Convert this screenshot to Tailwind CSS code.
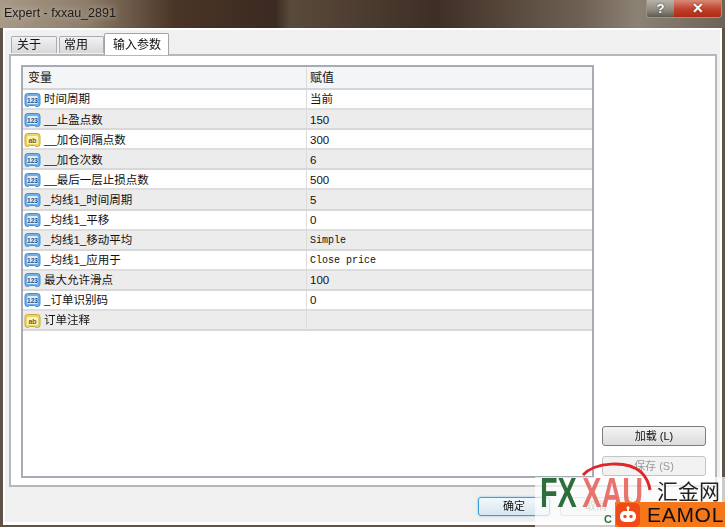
<!DOCTYPE html>
<html lang="zh">
<head>
    <meta charset="UTF-8">
    <title>Expert - fxxau_2891</title>
    <script src="https://cdn.jsdelivr.net/npm/@tailwindcss/browser@4"></script>
</head>
<body class="relative w-[725px] h-[527px] overflow-hidden flex flex-col bg-[#5f5246] blur-[0.4px] font-['Liberation_Sans','Noto_Sans_CJK_SC',sans-serif] text-[12px] text-[#111]">
    <svg class="hidden">
        <symbol id="ic-num" viewBox="0 0 16 15">
            <path d="M3 .5h10a2.500 2.500 0 0 1 2.500 2.500v8a2.500 2.500 0 0 1-2.500 2.500h-1.500l-1.500-1H5l-1.500 1H3A2.500 2.500 0 0 1 .5 11V3A2.500 2.500 0 0 1 3 .5z" fill="#6fb0e8" stroke="#4a8ccc"/>
            <rect x="2.500" y="3" width="11" height="8" rx="1.500" fill="#dcecfa"/>
            <text x="8" y="9.500" text-anchor="middle" font-size="6.500" font-weight="700" font-family="Liberation Sans" fill="#23508c">123</text>
        </symbol>
        <symbol id="ic-str" viewBox="0 0 16 15">
            <path d="M3 .5h10a2.500 2.500 0 0 1 2.500 2.500v8a2.500 2.500 0 0 1-2.500 2.500h-1.500l-1.500-1H5l-1.500 1H3A2.500 2.500 0 0 1 .5 11V3A2.500 2.500 0 0 1 3 .5z" fill="#ecd560" stroke="#c8aa3c"/>
            <rect x="2.500" y="3" width="11" height="8" rx="1.500" fill="#fbf3c4"/>
            <text x="8" y="9.500" text-anchor="middle" font-size="7" font-weight="700" font-family="Liberation Sans" fill="#7a5c14">ab</text>
        </symbol>
    </svg>

    <!-- title bar -->
    <header class="h-[28px] shrink-0 flex justify-between bg-[linear-gradient(90deg,#a89a88_0%,#8d7c69_12%,#4a3527_24%,#3b2a20_38%,#5a4a3b_40%,#3f2e24_60%,#6e6153_80%,#8c8274_88%,#6c6256_100%)]">
        <span class="pl-[4px] pt-[4px] text-[12.500px] leading-[18px] text-[#1c1c1c] [text-shadow:0_0_6px_#d8d0c4]">Expert - fxxau_2891</span>
        <div class="flex h-[18px] mr-[3px] border border-t-0 border-[#9c9488] rounded-b-[4px] overflow-hidden">
            <div class="w-[27px] flex items-center justify-center bg-[linear-gradient(#b8b2a8,#8e887c_60%,#5e5a50)] text-white font-bold text-[13px] [text-shadow:0_0_2px_#334]">?</div>
            <div class="w-[47px] flex items-center justify-center bg-[linear-gradient(#d88a78,#c0402a_55%,#b02a12)] text-white font-bold text-[14px] [text-shadow:0_0_2px_#522]">✕</div>
        </div>
    </header>

    <div class="flex-1 mx-[3px] mb-[2px] p-[2px] pb-[3px] bg-white flex flex-col">
        <div class="flex-1 bg-[#f0f0f0] flex flex-col px-[4px]">
            <!-- tabs -->
            <div class="h-[24px] shrink-0 flex items-end pl-[2px] gap-[2px] relative z-10">
                <div class="w-[46px] h-[17px] mb-[1px] flex items-center pl-[5px] bg-[linear-gradient(#f2f2f2,#d8d8d8)] border border-b-0 border-[#a8acb4] rounded-t-[2px]">关于</div>
                <div class="w-[45px] h-[17px] mb-[1px] flex items-center pl-[4px] bg-[linear-gradient(#f2f2f2,#d8d8d8)] border border-b-0 border-[#a8acb4] rounded-t-[2px]">常用</div>
                <div class="w-[65px] h-[22px] -ml-[2px] -mb-[1px] flex items-center pl-[8px] bg-white border border-b-0 border-[#a0a4ac] rounded-t-[2px]">输入参数</div>
            </div>
            <!-- pane -->
            <div class="h-[433px] shrink-0 mr-[-1px] flex gap-[8px] pt-[9px] pl-[10px] pr-[11px] pb-[7px] bg-white border-2 border-[#b4b7be]">
                <div class="w-[573px] shrink-0 border-2 border-[#a8abb4] bg-white">
                    <div class="h-[23px] grid grid-cols-[283px_1fr] items-center bg-[#f4f5f7] border-b-2 border-[#d4d5d8]">
                        <span class="pl-[5px]">变量</span>
                        <span class="pl-[3px] h-full flex items-center border-l border-[#dcdcdc]">赋值</span>
                    </div>
                    <ul class="text-[11.500px]">
                        <li class="h-[20.100px] grid grid-cols-[283px_1fr] items-center bg-white shadow-[inset_0_-2px_0_#dedede]">
                            <span class="flex items-center gap-[3px] pl-[1px]"><svg class="w-[17px] h-[15px]"><use href="#ic-num"/></svg>时间周期</span>
                            <span class="pl-[3px] h-full flex items-center border-l border-[#dcdcdc]">当前</span>
                        </li>
                        <li class="h-[20.100px] grid grid-cols-[283px_1fr] items-center bg-[#ececec] shadow-[inset_0_-2px_0_#d8d8d8]">
                            <span class="flex items-center gap-[3px] pl-[1px]"><svg class="w-[17px] h-[15px]"><use href="#ic-num"/></svg>__止盈点数</span>
                            <span class="pl-[3px] h-full flex items-center border-l border-[#dcdcdc]">150</span>
                        </li>
                        <li class="h-[20.100px] grid grid-cols-[283px_1fr] items-center bg-white shadow-[inset_0_-2px_0_#dedede]">
                            <span class="flex items-center gap-[3px] pl-[1px]"><svg class="w-[17px] h-[15px]"><use href="#ic-str"/></svg>__加仓间隔点数</span>
                            <span class="pl-[3px] h-full flex items-center border-l border-[#dcdcdc]">300</span>
                        </li>
                        <li class="h-[20.100px] grid grid-cols-[283px_1fr] items-center bg-[#ececec] shadow-[inset_0_-2px_0_#d8d8d8]">
                            <span class="flex items-center gap-[3px] pl-[1px]"><svg class="w-[17px] h-[15px]"><use href="#ic-num"/></svg>__加仓次数</span>
                            <span class="pl-[3px] h-full flex items-center border-l border-[#dcdcdc]">6</span>
                        </li>
                        <li class="h-[20.100px] grid grid-cols-[283px_1fr] items-center bg-white shadow-[inset_0_-2px_0_#dedede]">
                            <span class="flex items-center gap-[3px] pl-[1px]"><svg class="w-[17px] h-[15px]"><use href="#ic-num"/></svg>__最后一层止损点数</span>
                            <span class="pl-[3px] h-full flex items-center border-l border-[#dcdcdc]">500</span>
                        </li>
                        <li class="h-[20.100px] grid grid-cols-[283px_1fr] items-center bg-[#ececec] shadow-[inset_0_-2px_0_#d8d8d8]">
                            <span class="flex items-center gap-[3px] pl-[1px]"><svg class="w-[17px] h-[15px]"><use href="#ic-num"/></svg>_均线1_时间周期</span>
                            <span class="pl-[3px] h-full flex items-center border-l border-[#dcdcdc]">5</span>
                        </li>
                        <li class="h-[20.100px] grid grid-cols-[283px_1fr] items-center bg-white shadow-[inset_0_-2px_0_#dedede]">
                            <span class="flex items-center gap-[3px] pl-[1px]"><svg class="w-[17px] h-[15px]"><use href="#ic-num"/></svg>_均线1_平移</span>
                            <span class="pl-[3px] h-full flex items-center border-l border-[#dcdcdc]">0</span>
                        </li>
                        <li class="h-[20.100px] grid grid-cols-[283px_1fr] items-center bg-[#ececec] shadow-[inset_0_-2px_0_#d8d8d8]">
                            <span class="flex items-center gap-[3px] pl-[1px]"><svg class="w-[17px] h-[15px]"><use href="#ic-num"/></svg>_均线1_移动平均</span>
                            <span class="pl-[3px] h-full flex items-center border-l border-[#dcdcdc] font-['Liberation_Mono',monospace] text-[10px]">Simple</span>
                        </li>
                        <li class="h-[20.100px] grid grid-cols-[283px_1fr] items-center bg-white shadow-[inset_0_-2px_0_#dedede]">
                            <span class="flex items-center gap-[3px] pl-[1px]"><svg class="w-[17px] h-[15px]"><use href="#ic-num"/></svg>_均线1_应用于</span>
                            <span class="pl-[3px] h-full flex items-center border-l border-[#dcdcdc] font-['Liberation_Mono',monospace] text-[10px]">Close price</span>
                        </li>
                        <li class="h-[20.100px] grid grid-cols-[283px_1fr] items-center bg-[#ececec] shadow-[inset_0_-2px_0_#d8d8d8]">
                            <span class="flex items-center gap-[3px] pl-[1px]"><svg class="w-[17px] h-[15px]"><use href="#ic-num"/></svg>最大允许滑点</span>
                            <span class="pl-[3px] h-full flex items-center border-l border-[#dcdcdc]">100</span>
                        </li>
                        <li class="h-[20.100px] grid grid-cols-[283px_1fr] items-center bg-white shadow-[inset_0_-2px_0_#dedede]">
                            <span class="flex items-center gap-[3px] pl-[1px]"><svg class="w-[17px] h-[15px]"><use href="#ic-num"/></svg>_订单识别码</span>
                            <span class="pl-[3px] h-full flex items-center border-l border-[#dcdcdc]">0</span>
                        </li>
                        <li class="h-[20.100px] grid grid-cols-[283px_1fr] items-center bg-[#ececec] shadow-[inset_0_-2px_0_#d8d8d8]">
                            <span class="flex items-center gap-[3px] pl-[1px]"><svg class="w-[17px] h-[15px]"><use href="#ic-str"/></svg>订单注释</span>
                            <span class="h-full border-l border-[#dcdcdc]"></span>
                        </li>
                    </ul>
                </div>
                <div class="w-[104px] shrink-0 flex flex-col justify-end gap-[10px] pb-[2px]">
                    <button class="h-[20px] rounded-[3px] border border-[#7c7c7c] bg-[linear-gradient(#f4f4f4,#dcdcdc)] text-[11px]">加载 (L)</button>
                    <button class="h-[20px] rounded-[3px] border border-[#c4c4c4] bg-[#f2f2f2] text-[11px] text-[#9a9a9a]">保存 (S)</button>
                </div>
            </div>
            <!-- bottom bar -->
            <div class="flex-1 flex justify-end gap-[10px] pt-[10px] pr-[84px]">
                <button class="w-[72px] h-[19px] rounded-[3px] border border-[#3aa0d8] bg-[linear-gradient(#f0f8fc,#d8e6ee)] shadow-[0_0_2px_#5ab8e8] text-[11px]">确定</button>
                <button class="w-[72px] h-[19px] rounded-[3px] border border-[#b4b4b4] bg-[#ececec] text-[11px] text-[#777]">取消</button>
            </div>
        </div>
    </div>

    <!-- watermark over the dialog -->
    <div class="absolute left-[535px] top-[477px] w-[190px] h-[50px] bg-white/70"></div>
    <svg class="absolute left-[575px] top-[458px] w-[90px] h-[45px]" viewBox="0 0 90 45" fill="none">
        <path d="M8 17C20 4 52 2 66 14c5 5 8 11 9 18" stroke="#e0262a" stroke-width="3"/>
    </svg>
    <div class="absolute left-[540px] top-[468px] origin-left scale-x-[0.67] whitespace-nowrap font-bold text-[43px] leading-[48px]">
        <span class="text-[#2e6e3c]">FX</span><span class="ml-[8px] text-[#e4504a]/80">XAU</span>
    </div>
    <div class="absolute left-[657px] top-[477px] font-['Noto_Sans_CJK_SC',sans-serif] text-[21px] leading-[26px] text-[#222]">汇金网</div>
    <div class="absolute left-[604px] top-[512px] font-bold text-[11px] leading-[14px] text-[#2e6e3c]">C</div>
    <div class="absolute left-[615px] top-[502px] w-[110px] h-[25px] bg-[#f6761a] flex items-center">
        <div class="ml-[1px] w-[24px] h-[24px] rounded-[5px] bg-[#f04a18] flex items-center justify-center">
            <svg class="w-[18px] h-[18px]" viewBox="0 0 18 18">
                <rect x="1" y="5" width="16" height="11" rx="5" fill="#fff"/>
                <rect x="8.200" y="1" width="1.600" height="4" fill="#fff"/>
                <circle cx="9" cy="1.800" r="1.500" fill="#fff"/>
                <circle cx="6" cy="10.500" r="1.700" fill="#f04a18"/>
                <circle cx="12" cy="10.500" r="1.700" fill="#f04a18"/>
            </svg>
        </div>
        <span class="ml-[7px] text-[21px] leading-[25px] tracking-[0.700px] text-[#111]">EAMOL</span>
    </div>
</body>
</html>
